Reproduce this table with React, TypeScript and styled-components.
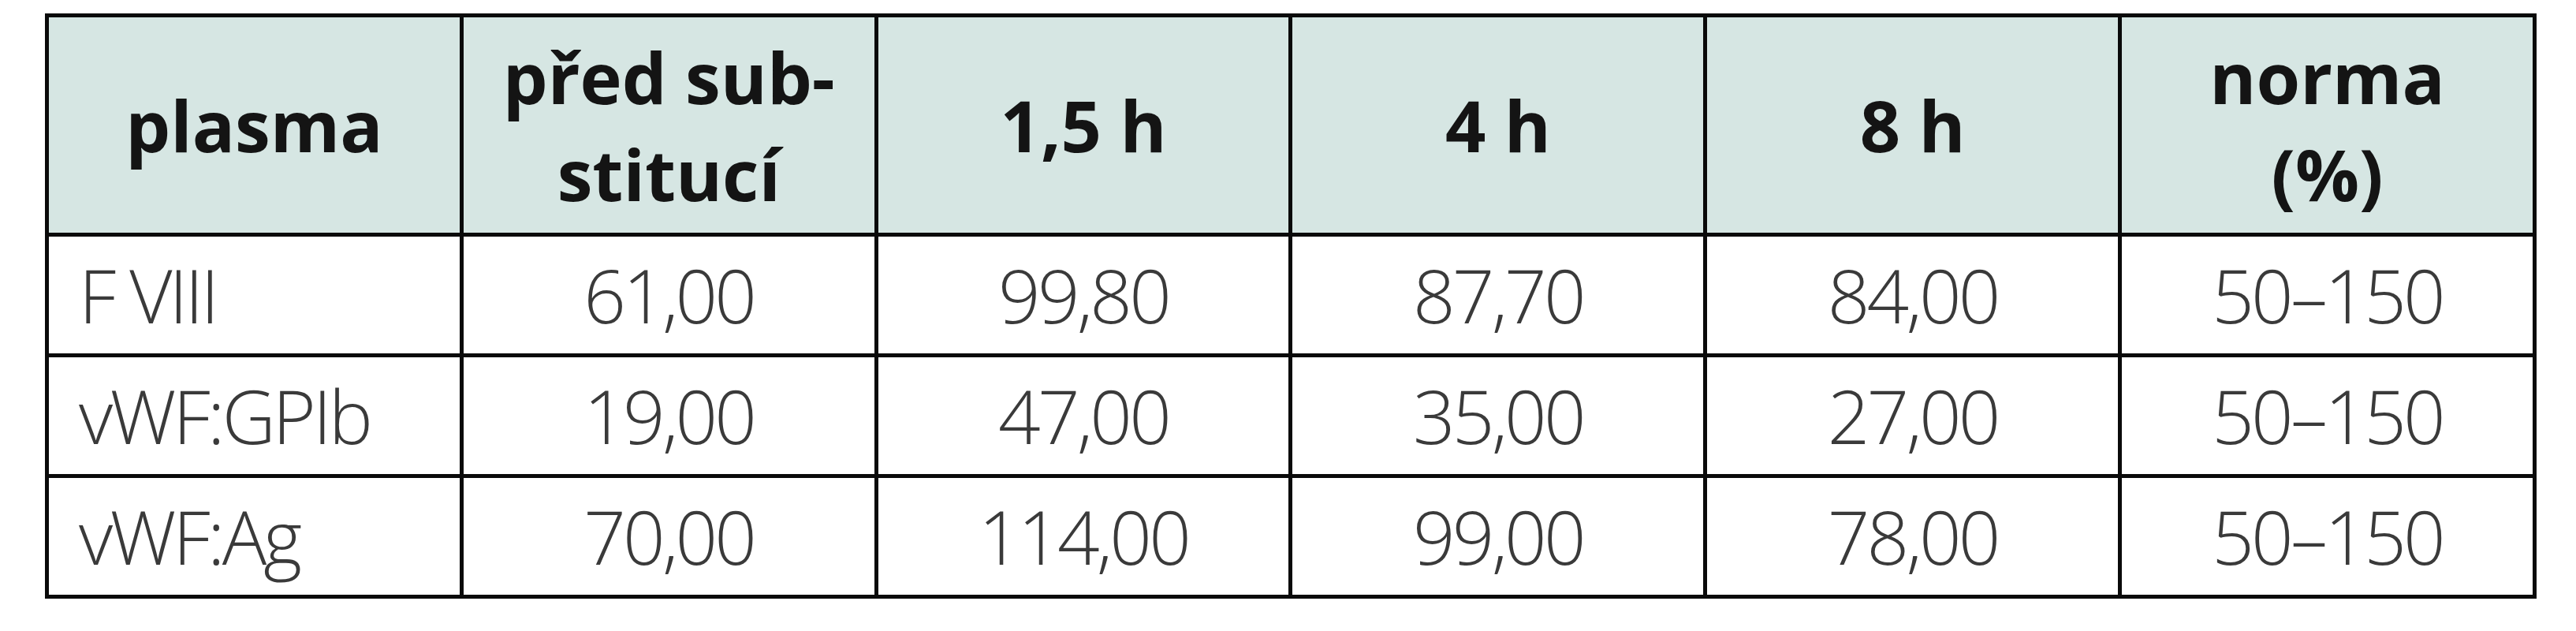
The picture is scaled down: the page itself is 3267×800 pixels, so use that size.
import styled, { createGlobalStyle } from "styled-components";

const GlobalStyle = createGlobalStyle`
  html, body {
    margin: 0;
    padding: 0;
    background: #ffffff;
  }
  body {
    font-family: "Open Sans", "Noto Sans", sans-serif;
  }
`;

const Page = styled.div`
  width: 3267px;
  height: 800px;
  padding: 17px 0 0 57px;
  box-sizing: border-box;
  background: #ffffff;
`;

const Table = styled.table`
  border-collapse: collapse;
  table-layout: fixed;
  width: 3160px;
  border: 5px solid #0a0a0a;
`;

const HeadRow = styled.tr`
  height: 278px;
  background: #d6e6e3;
`;

const BodyRow = styled.tr`
  height: 153px;
  background: #ffffff;
`;

const HeadCell = styled.th`
  border: 5px solid #0a0a0a;
  padding: 0 20px;
  font-family: "Open Sans", "Noto Sans", sans-serif;
  font-weight: 700;
  font-size: 90px;
  line-height: 123px;
  color: #141414;
  text-align: center;
  vertical-align: middle;
`;

const Cell = styled.td<{ $align?: "left" | "center" }>`
  border: 5px solid #0a0a0a;
  padding: ${({ $align }) => ($align === "left" ? "0 0 0 38px" : "0")};
  font-family: "Open Sans", "Noto Sans", sans-serif;
  font-weight: 300;
  font-size: 94px;
  letter-spacing: -0.04em;
  color: #3a3a3a;
  text-align: ${({ $align }) => $align ?? "center"};
  vertical-align: middle;
  white-space: nowrap;
`;

const rows = [
  { name: "F VIII", values: ["61,00", "99,80", "87,70", "84,00", "50–150"] },
  { name: "vWF:GPIb", values: ["19,00", "47,00", "35,00", "27,00", "50–150"] },
  { name: "vWF:Ag", values: ["70,00", "114,00", "99,00", "78,00", "50–150"] },
];

export default function App() {
  return (
    <>
      <GlobalStyle />
      <Page>
        <Table>
          <thead>
            <HeadRow>
              <HeadCell>plasma</HeadCell>
              <HeadCell>
                před sub-
                <br />
                stitucí
              </HeadCell>
              <HeadCell>1,5 h</HeadCell>
              <HeadCell>4 h</HeadCell>
              <HeadCell>8 h</HeadCell>
              <HeadCell>
                norma
                <br />
                (%)
              </HeadCell>
            </HeadRow>
          </thead>
          <tbody>
            {rows.map((row) => (
              <BodyRow key={row.name}>
                <Cell $align="left">{row.name}</Cell>
                {row.values.map((v, i) => (
                  <Cell key={i}>{v}</Cell>
                ))}
              </BodyRow>
            ))}
          </tbody>
        </Table>
      </Page>
    </>
  );
}
